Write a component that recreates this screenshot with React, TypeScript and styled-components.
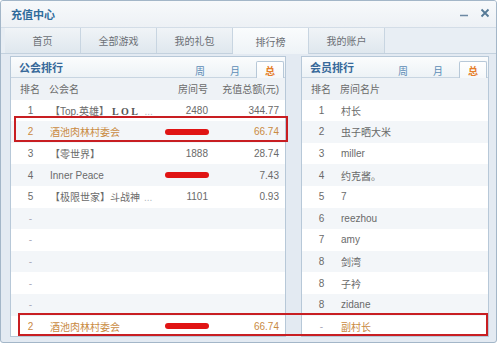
import styled, {createGlobalStyle} from 'styled-components';

type GuildRow = {rank: string; name?: string; tag?: string; more?: boolean; room?: string; hidden?: boolean; amount?: string; mine?: boolean};
type MemberRow = {rank: string; name: string; mine?: boolean};

const guildRows: GuildRow[] = [
    {rank: '1', name: '【Top.英雄】', tag: 'LOL', more: true, room: '2480', amount: '344.77'},
    {rank: '2', name: '酒池肉林村委会', hidden: true, amount: '66.74', mine: true},
    {rank: '3', name: '【零世界】', room: '1888', amount: '28.74'},
    {rank: '4', name: 'Inner Peace', hidden: true, amount: '7.43'},
    {rank: '5', name: '【极限世家】斗战神', more: true, room: '1101', amount: '0.93'},
    {rank: '-'},
    {rank: '-'},
    {rank: '-'},
    {rank: '-'},
    {rank: '-'},
    {rank: '2', name: '酒池肉林村委会', hidden: true, amount: '66.74', mine: true},
];

const memberRows: MemberRow[] = [
    {rank: '1', name: '村长'},
    {rank: '2', name: '虫子晒大米'},
    {rank: '3', name: 'miller'},
    {rank: '4', name: '约克酱。'},
    {rank: '5', name: '7'},
    {rank: '6', name: 'reezhou'},
    {rank: '7', name: 'amy'},
    {rank: '8', name: '剑湾'},
    {rank: '8', name: '子衿'},
    {rank: '8', name: 'zidane'},
    {rank: '-', name: '副村长', mine: true},
];

const navTabs = ['首页', '全部游戏', '我的礼包', '排行榜', '我的账户'];
const periods = ['周', '月', '总'];

const PeriodTabs = () => (
    <StyledPeriods>
        {periods.map((p, i) => (
            <StyledPeriod key={p} $active={i === 2}>{p}</StyledPeriod>
        ))}
    </StyledPeriods>
);

const App = () => {
    return (
        <>
            <GlobalStyle />
            <StyledWindow>
                <StyledTitleBar>
                    <StyledTitle>充值中心</StyledTitle>
                    <StyledControls>
                        <svg width="10" height="10" viewBox="0 0 10 10">
                            <path d="M1 7.5h8" stroke="#6d89a3" strokeWidth="1.6" />
                        </svg>
                        <svg width="10" height="10" viewBox="0 0 10 10">
                            <path d="M1.5 1.5l7 7M8.5 1.5l-7 7" stroke="#557996" strokeWidth="1.8" />
                        </svg>
                    </StyledControls>
                </StyledTitleBar>
                <StyledNav>
                    {navTabs.map((t, i) => (
                        <StyledNavTab key={t} $active={i === 3}>{t}</StyledNavTab>
                    ))}
                </StyledNav>
                <StyledBody>
                    <StyledPanel $width={276}>
                        <StyledPanelHead>
                            <strong>公会排行</strong>
                            <PeriodTabs />
                        </StyledPanelHead>
                        <StyledGuildRow $head>
                            <StyledRank $head>排名</StyledRank>
                            <span>公会名</span>
                            <StyledNum>房间号</StyledNum>
                            <StyledNum>充值总额(元)</StyledNum>
                        </StyledGuildRow>
                        {guildRows.map((r, i) => (
                            <StyledGuildRow key={i} $striped={i % 2 === 1} $mine={r.mine}>
                                <StyledRank $dash={r.rank === '-'}>{r.rank}</StyledRank>
                                <StyledName>
                                    {r.name}
                                    {r.tag && <StyledTag>{r.tag}</StyledTag>}
                                    {r.more && <StyledMore>...</StyledMore>}
                                </StyledName>
                                <StyledNum>{r.hidden ? <StyledScribble /> : r.room}</StyledNum>
                                <StyledNum>{r.amount}</StyledNum>
                            </StyledGuildRow>
                        ))}
                    </StyledPanel>
                    <StyledPanel $width={188}>
                        <StyledPanelHead>
                            <strong>会员排行</strong>
                            <PeriodTabs />
                        </StyledPanelHead>
                        <StyledMemberRow $head>
                            <StyledRank $head>排名</StyledRank>
                            <span>房间名片</span>
                        </StyledMemberRow>
                        {memberRows.map((r, i) => (
                            <StyledMemberRow key={i} $striped={i % 2 === 1} $mine={r.mine}>
                                <StyledRank $dash={r.rank === '-'}>{r.rank}</StyledRank>
                                <StyledName>{r.name}</StyledName>
                            </StyledMemberRow>
                        ))}
                    </StyledPanel>
                </StyledBody>
                <StyledMark $left={13} $top={115} $width={274} $height={26} />
                <StyledMark $left={17} $top={312} $width={470} $height={23} />
            </StyledWindow>
        </>
    );
};

export default App;

const GlobalStyle = createGlobalStyle`
    body {
        margin: 0;
        background: #fff;
        font-family: "Liberation Sans", "Noto Sans CJK SC", sans-serif;
        font-size: 10px;
        color: #666;
    }
`;

const StyledWindow = styled.div`
    position: relative;
    width: 497px;
    height: 343px;
    box-sizing: border-box;
    border: 1px solid #a3b6c8;
    border-radius: 3px;
    background: #e3eaf2;
    display: flex;
    flex-direction: column;
    overflow: hidden;
`;

const StyledTitleBar = styled.div`
    display: flex;
    align-items: center;
    justify-content: space-between;
    height: 26px;
    padding: 0 6px 0 10px;
    background: linear-gradient(#f7f9fb, #edf1f5);
`;

const StyledTitle = styled.span`
    font-size: 11px;
    font-weight: bold;
    color: #2f6b9b;
`;

const StyledControls = styled.div`
    display: flex;
    align-items: center;
    gap: 11px;
    margin-top: -2px;
`;

const StyledNav = styled.div`
    display: flex;
    height: 25px;
    padding-left: 4px;
    border-top: 1px solid #d3dde7;
    border-bottom: 1px solid #c3d1de;
    background: #e8eef4;
`;

const StyledNavTab = styled.div<{$active?: boolean}>`
    display: flex;
    align-items: center;
    justify-content: center;
    width: 75px;
    border-right: 1px solid #c8d5e1;
    margin-bottom: ${({$active}) => ($active ? '-1px' : '0')};
    background: ${({$active}) => ($active ? 'linear-gradient(#fafcfd, #eef3f7)' : 'linear-gradient(#f0f4f7, #dfe7ee)')};
    color: #6b6f75;
    font-size: 10px;
`;

const StyledBody = styled.div`
    flex: 1;
    display: flex;
    gap: 15px;
    padding: 2px 0 0 9px;
`;

const StyledPanel = styled.div<{$width: number}>`
    width: ${({$width}) => $width}px;
    height: 281px;
    box-sizing: border-box;
    border: 1px solid #b7c8d8;
    background: #fff;
    overflow: hidden;
`;

const StyledPanelHead = styled.div`
    display: flex;
    align-items: flex-end;
    justify-content: space-between;
    height: 20px;
    padding-left: 8px;
    border-bottom: 1px solid #c8d5e1;
    background: linear-gradient(#fbfcfd, #edf2f6);

    strong {
        align-self: center;
        font-size: 11px;
        color: #37699a;
    }
`;

const StyledPeriods = styled.div`
    display: flex;
    gap: 7px;
    margin-right: 1px;
`;

const StyledPeriod = styled.span<{$active?: boolean}>`
    display: flex;
    align-items: center;
    justify-content: center;
    width: 28px;
    height: 17px;
    margin-bottom: -1px;
    box-sizing: border-box;
    border: 1px solid ${({$active}) => ($active ? '#b7c8d8' : 'transparent')};
    border-bottom: none;
    border-radius: 2px 2px 0 0;
    background: ${({$active}) => ($active ? 'linear-gradient(#fff, #f5f8fa)' : 'transparent')};
    color: ${({$active}) => ($active ? '#e57d2a' : '#5c8cb6')};
    font-weight: ${({$active}) => ($active ? 'bold' : 'normal')};
    font-size: 10px;
`;

const StyledRowBase = styled.div<{$head?: boolean; $striped?: boolean; $mine?: boolean}>`
    display: grid;
    align-items: center;
    height: 21.6px;
    background: ${({$head, $striped}) => ($head ? '#eef2f6' : $striped ? '#f3f6f9' : '#fff')};
    color: ${({$mine}) => ($mine ? '#c98a3f' : '#6a6a6a')};
    white-space: nowrap;
`;

const StyledGuildRow = styled(StyledRowBase)`
    grid-template-columns: 38px 113px 52px 71px;
`;

const StyledMemberRow = styled(StyledRowBase)`
    grid-template-columns: 38px 1fr;
`;

const StyledRank = styled.span<{$head?: boolean; $dash?: boolean}>`
    text-align: center;
    color: ${({$dash}) => ($dash ? '#aab' : 'inherit')};
    padding-left: ${({$head}) => ($head ? '0' : '1px')};
`;

const StyledName = styled.span`
    overflow: hidden;
    padding-left: 1px;
`;

const StyledTag = styled.span`
    margin-left: 3px;
    font-family: "Liberation Serif", serif;
    font-weight: bold;
    letter-spacing: 2.5px;
    color: #555;
`;

const StyledMore = styled.span`
    margin-left: 4px;
    color: #b0b8c0;
`;

const StyledNum = styled.span`
    display: flex;
    justify-content: flex-end;
    align-items: center;
    padding-right: 6px;
`;

const StyledScribble = styled.span`
    display: block;
    width: 44px;
    height: 6px;
    margin-right: -1px;
    border-radius: 3px;
    background: #e01414;
`;

const StyledMark = styled.div<{$left: number; $top: number; $width: number; $height: number}>`
    position: absolute;
    left: ${({$left}) => $left}px;
    top: ${({$top}) => $top}px;
    width: ${({$width}) => $width}px;
    height: ${({$height}) => $height}px;
    box-sizing: border-box;
    border: 2px solid #c81e22;
    pointer-events: none;
`;
